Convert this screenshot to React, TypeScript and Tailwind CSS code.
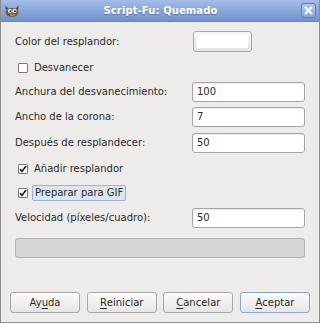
import React from 'react';

const font = { fontFamily: '"DejaVu Sans", "Liberation Sans", sans-serif' };

const Entry = ({ label, value }: { label: string; value: string }) => (
  <div className="flex items-center justify-between h-[20px]">
    <span>{label}</span>
    <div className="w-[113px] h-[20px] bg-white border border-[#a5a5a3] rounded-[3px] flex items-center pl-[4px] shadow-[inset_0_1px_1px_rgba(0,0,0,0.08)]">
      {value}
    </div>
  </div>
);

const Check = ({ label, checked, focus }: { label: string; checked?: boolean; focus?: boolean }) => (
  <div className="flex items-center h-[16px] pl-[3px]">
    <div className="w-[10px] h-[10px] border border-[#7a7a78] bg-white rounded-[1px] flex items-center justify-center">
      {checked && (
        <svg width="8" height="8" viewBox="0 0 8 8">
          <path d="M1 4 L3 6.5 L7 1" fill="none" stroke="#1e1e1e" strokeWidth="1.6" />
        </svg>
      )}
    </div>
    <span
      className={
        focus
          ? 'ml-[4px] px-[2px] h-[16px] flex items-center bg-[#dde5f1] border border-[#9db1d3] rounded-[2px]'
          : 'ml-[6px]'
      }
    >
      {label}
    </span>
  </div>
);

const Btn = ({ pre, u, post, def }: { pre: string; u: string; post: string; def?: boolean }) => (
  <div
    className={`w-[70px] h-[21px] flex items-center justify-center rounded-[3px] border bg-gradient-to-b from-[#fbfbfa] to-[#e6e5e3] ${
      def ? 'border-[#8da6cf]' : 'border-[#a9a8a6]'
    }`}
  >
    {pre}
    <span className="underline underline-offset-[2px]">{u}</span>
    {post}
  </div>
);

export default function App() {
  return (
    <div
      style={font}
      className="w-[320px] h-[323px] flex flex-col bg-[#edeceb] border-x border-b border-[#8c8c8a] text-[10px] leading-none text-[#2a2b2a] overflow-hidden"
    >
      <div className="h-[22px] shrink-0 flex items-center justify-between px-[4px] bg-gradient-to-b from-[#a3bde8] to-[#7291cb] border-b border-[#6a86ba] -mx-px">
        <svg width="16" height="14" viewBox="0 0 16 14">
          <ellipse cx="8" cy="8.5" rx="6.5" ry="4.5" fill="#6b5d45" />
          <path d="M2 6 L1 1.5 L4.5 4.5 Z M14 6 L15 1.5 L11.5 4.5 Z" fill="#5a4e3a" />
          <circle cx="6" cy="7" r="2" fill="#fff" />
          <circle cx="10.5" cy="7" r="2" fill="#fff" />
          <circle cx="6.4" cy="7.2" r="0.9" fill="#000" />
          <circle cx="10.9" cy="7.2" r="0.9" fill="#000" />
          <ellipse cx="8.5" cy="11" rx="2.5" ry="1.2" fill="#9a8a6a" />
        </svg>
        <span className="text-white font-bold tracking-[0.1px]" style={{ textShadow: '0 1px 1px rgba(40,60,110,0.4)' }}>
          Script-Fu: Quemado
        </span>
        <div className="w-[15px] h-[15px] rounded-[3px] border border-[#5f7db4] bg-gradient-to-b from-[#b2c8ec] to-[#8aa6d6] flex items-center justify-center">
          <svg width="9" height="9" viewBox="0 0 9 9">
            <path d="M1.5 1.5 L7.5 7.5 M7.5 1.5 L1.5 7.5" stroke="#fff" strokeWidth="2" strokeLinecap="round" />
          </svg>
        </div>
      </div>

      <div className="flex flex-col px-[14px]">
        <div className="mt-[9px] flex items-center justify-between h-[21px]">
          <span>Color del resplandor:</span>
          <div className="w-[59px] h-[21px] mr-[53px] rounded-[3px] border border-[#a9a8a6] bg-gradient-to-b from-[#fafaf9] to-[#e4e3e1] p-[3px]">
            <div className="w-full h-full bg-white" />
          </div>
        </div>
        <div className="mt-[8px]">
          <Check label="Desvanecer" />
        </div>
        <div className="mt-[6px]">
          <Entry label="Anchura del desvanecimiento:" value="100" />
        </div>
        <div className="mt-[5px]">
          <Entry label="Ancho de la corona:" value="7" />
        </div>
        <div className="mt-[6px]">
          <Entry label="Después de resplandecer:" value="50" />
        </div>
        <div className="mt-[8px]">
          <Check label="Añadir resplandor" checked />
        </div>
        <div className="mt-[8px]">
          <Check label="Preparar para GIF" checked focus />
        </div>
        <div className="mt-[7px]">
          <Entry label="Velocidad (píxeles/cuadro):" value="50" />
        </div>
        <div className="mt-[10px] h-[20px] rounded-[3px] border border-[#b2b1af] bg-[#d7d6d4]" />
      </div>

      <div className="mt-auto mb-[9px] flex justify-between px-[9px]">
        <Btn pre="Ay" u="u" post="da" />
        <Btn pre="" u="R" post="einiciar" />
        <Btn pre="" u="C" post="ancelar" />
        <Btn pre="" u="A" post="ceptar" def />
      </div>
    </div>
  );
}
